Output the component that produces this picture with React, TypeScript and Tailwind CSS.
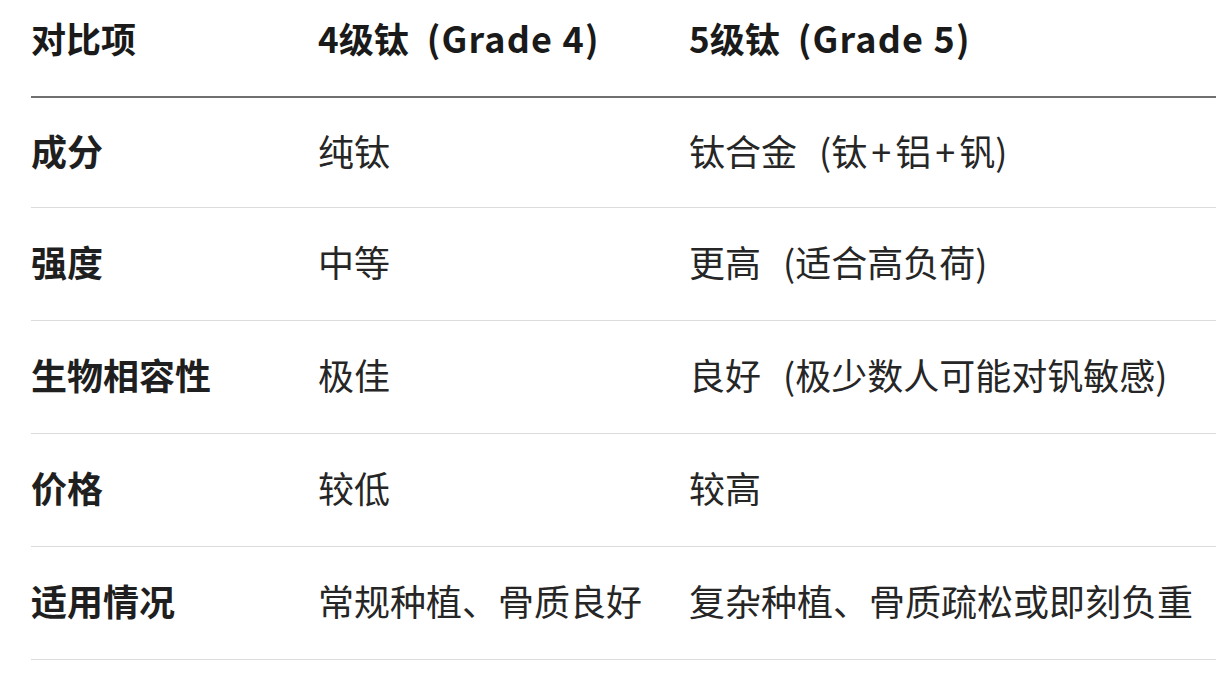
const rows = [
  { label: "成分", g4: "纯钛", g5: "钛合金", note: ["钛", "铝", "钒"] },
  { label: "强度", g4: "中等", g5: "更高", note: ["适合高负荷"] },
  { label: "生物相容性", g4: "极佳", g5: "良好", note: ["极少数人可能对钒敏感"] },
  { label: "价格", g4: "较低", g5: "较高" },
  { label: "适用情况", g4: "常规种植、骨质良好", g5: "复杂种植、骨质疏松或即刻负重" },
];

function Note({ parts }: { parts: string[] }) {
  return (
    <span className="ml-[22px]">
      (
      {parts.map((p, i) => (
        <span key={p}>
          {i > 0 && <span className="mx-[4px]">+</span>}
          {p}
        </span>
      ))}
      )
    </span>
  );
}

export default function App() {
  return (
    <div
      className="w-[1228px] h-[684px] bg-white overflow-hidden pl-[31px] pr-[12px] text-[#262626]"
      style={{ fontFamily: '"Noto Sans CJK SC", "Noto Sans", sans-serif' }}
    >
      {/* Header */}
      <div className="grid grid-cols-[287px_371px_1fr] items-center h-[98px] pb-[22px] border-b-2 border-[#707070] text-[35px] font-bold text-[#1a1a1a] leading-none">
        <div>对比项</div>
        <div className="whitespace-nowrap">
          4级钛<span className="ml-[18px] text-[36px] tracking-[1.2px]">(Grade 4)</span>
        </div>
        <div className="whitespace-nowrap">
          5级钛<span className="ml-[18px] text-[36px] tracking-[1.2px]">(Grade 5)</span>
        </div>
      </div>

      {rows.map((row, i) => (
        <div
          key={row.label}
          className={
            "grid grid-cols-[287px_371px_1fr] items-center pb-[6px] border-b border-[#dcdcdc] text-[36px] leading-none " +
            (i === 0 ? "h-[110px]" : "h-[113px]")
          }
        >
          <div className="font-bold text-[#1f1f1f]">{row.label}</div>
          <div className="whitespace-nowrap">{row.g4}</div>
          <div className="whitespace-nowrap">
            {row.g5}
            {row.note && <Note parts={row.note} />}
          </div>
        </div>
      ))}
    </div>
  );
}
